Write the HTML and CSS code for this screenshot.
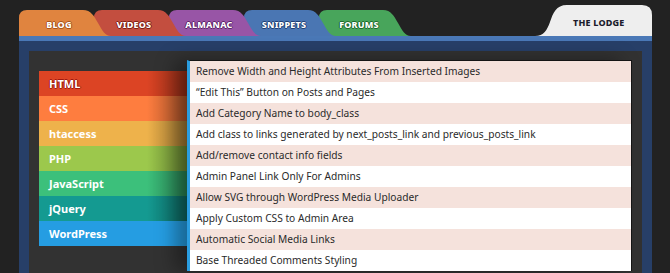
FILE: index.html
```html
<!DOCTYPE html>
<html>
<head>
<meta charset="utf-8">
<link rel="stylesheet" href="styles.css">
</head>
<body>
<div class="wrap">
  <nav class="tabs">
    <a class="tab tab-blog"><svg class="tab-bg" viewBox="0 0 92 26" preserveAspectRatio="none"><path d="M0 26 L0 8 Q0 0 8 0 L64 0 C72 0 75 6 79 13 C83 20 86 26 92 26 Z"/></svg><span>BLOG</span></a>
    <a class="tab tab-videos"><svg class="tab-bg" viewBox="0 0 92 26" preserveAspectRatio="none"><path d="M0 26 L0 8 Q0 0 8 0 L64 0 C72 0 75 6 79 13 C83 20 86 26 92 26 Z"/></svg><span>VIDEOS</span></a>
    <a class="tab tab-almanac"><svg class="tab-bg" viewBox="0 0 92 26" preserveAspectRatio="none"><path d="M0 26 L0 8 Q0 0 8 0 L64 0 C72 0 75 6 79 13 C83 20 86 26 92 26 Z"/></svg><span>ALMANAC</span></a>
    <a class="tab tab-snippets"><svg class="tab-bg" viewBox="0 0 92 26" preserveAspectRatio="none"><path d="M0 26 L0 8 Q0 0 8 0 L64 0 C72 0 75 6 79 13 C83 20 86 26 92 26 Z"/></svg><span>SNIPPETS</span></a>
    <a class="tab tab-forums"><svg class="tab-bg" viewBox="0 0 92 26" preserveAspectRatio="none"><path d="M0 26 L0 8 Q0 0 8 0 L64 0 C72 0 75 6 79 13 C83 20 86 26 92 26 Z"/></svg><span>FORUMS</span></a>
    <a class="lodge"><svg class="tab-bg" viewBox="0 0 117 31" preserveAspectRatio="none"><path d="M0 31 C9 31 12 25 15 17 C18 8 21 0 32 0 L107 0 Q117 0 117 10 L117 31 Z"/></svg><span>THE LODGE</span></a>
  </nav>
  <div class="frame">
    <div class="inner">
      <ul class="cats">
        <li class="cat c-html">HTML</li>
        <li class="cat c-css">CSS</li>
        <li class="cat c-htaccess">htaccess</li>
        <li class="cat c-php">PHP</li>
        <li class="cat c-js">JavaScript</li>
        <li class="cat c-jquery">jQuery</li>
        <li class="cat c-wp active">WordPress</li>
      </ul>
      <ul class="list">
        <li>Remove Width and Height Attributes From Inserted Images</li>
        <li>“Edit This” Button on Posts and Pages</li>
        <li>Add Category Name to body_class</li>
        <li>Add class to links generated by next_posts_link and previous_posts_link</li>
        <li>Add/remove contact info fields</li>
        <li>Admin Panel Link Only For Admins</li>
        <li>Allow SVG through WordPress Media Uploader</li>
        <li>Apply Custom CSS to Admin Area</li>
        <li>Automatic Social Media Links</li>
        <li>Base Threaded Comments Styling</li>
      </ul>
    </div>
  </div>
</div>
</body>
</html>
```

FILE: styles.css
```css
html, body {
  margin: 0;
  padding: 0;
  background: #222222;
  overflow: hidden;
  font-family: "Noto Sans", "Open Sans", sans-serif;
}
.wrap {
  margin-left: 19px;
  width: 633px;
  padding-top: 5px;
}
.tabs {
  display: flex;
  align-items: flex-end;
  height: 31px;
}
.tab, .lodge {
  position: relative;
  display: block;
  text-decoration: none;
}
.tab {
  width: 92px;
  height: 26px;
  margin-right: -17px;
}
.tab-bg {
  position: absolute;
  left: 0;
  top: 0;
  width: 100%;
  height: 100%;
  display: block;
}
.tab span {
  position: relative;
  display: block;
  width: 80px;
  text-align: center;
  padding-top: 9px;
  font-size: 9px;
  line-height: 12px;
  font-weight: 800;
  letter-spacing: 0.2px;
  color: #fff;
}
.tab-blog { z-index: 5; }
.tab-blog path { fill: #e0843f; }
.tab-blog span { text-shadow: 1px 0 #a9541b, -1px 0 #a9541b, 0 1px #a9541b, 0 -1px #a9541b; }
.tab-videos { z-index: 4; }
.tab-videos path { fill: #c34e3f; }
.tab-videos span { text-shadow: 1px 0 #7d1f16, -1px 0 #7d1f16, 0 1px #7d1f16, 0 -1px #7d1f16; }
.tab-almanac { z-index: 3; }
.tab-almanac path { fill: #9855a6; }
.tab-almanac span { text-shadow: 1px 0 #5b2468, -1px 0 #5b2468, 0 1px #5b2468, 0 -1px #5b2468; }
.tab-snippets { z-index: 2; }
.tab-snippets path { fill: #4a76b3; }
.tab-snippets span { text-shadow: 1px 0 #1f3f74, -1px 0 #1f3f74, 0 1px #1f3f74, 0 -1px #1f3f74; }
.tab-forums { z-index: 1; }
.tab-forums path { fill: #48a55b; }
.tab-forums span { text-shadow: 1px 0 #1e6a2c, -1px 0 #1e6a2c, 0 1px #1e6a2c, 0 -1px #1e6a2c; }
.lodge {
  margin-left: auto;
  width: 117px;
  height: 31px;
}
.lodge path { fill: #eeeeee; }
.lodge span {
  position: relative;
  display: block;
  padding-left: 38px;
  padding-top: 12px;
  font-size: 9px;
  line-height: 12px;
  font-weight: 800;
  color: #1c1c2c;
  letter-spacing: 0.2px;
}
.frame {
  background: #273f68;
  border-top: 5px solid #4a78b6;
  padding: 10px 10px 0 10px;
}
.inner {
  background: #323232;
  display: flex;
  align-items: flex-start;
  padding: 0 10px 0 10px;
  height: 240px;
}
.cats {
  list-style: none;
  margin: 20px 0 0 0;
  padding: 0;
  width: 148px;
  flex: none;
  position: relative;
}
.cat {
  height: 25px;
  line-height: 25px;
  padding-left: 10px;
  font-size: 11px;
  font-weight: 700;
  color: #fff;
  position: relative;
}
.cat::after {
  content: "";
  position: absolute;
  top: 0;
  right: 0;
  bottom: 0;
  width: 40px;
  background: linear-gradient(to right, rgba(0,0,0,0), rgba(0,0,0,0.35));
}
.cat.active::after { display: none; }
.c-html { background: #dc4424; text-shadow: 1px 0 #a01a10, -1px 0 #a01a10, 0 1px #a01a10, 0 -1px #a01a10; }
.c-css { background: #fe7d3f; }
.c-htaccess { background: #eeb24b; }
.c-php { background: #9cc84c; }
.c-js { background: #3cc07b; }
.c-jquery { background: #149a91; }
.c-wp { background: #259de2; }
.list {
  list-style: none;
  margin: 9px 0 0 0;
  padding: 0;
  flex: 1;
  border: 1px solid #151515;
  border-left: 3px solid #2a9de0;
  border-bottom: 0;
  box-shadow: -12px 0 18px rgba(0,0,0,0.35);
  position: relative;
  z-index: 0;
}
.list li {
  height: 21px;
  line-height: 21px;
  padding-left: 6px;
  font-size: 10.2px;
  color: #2a2a2a;
  background: #ffffff;
  white-space: nowrap;
  overflow: hidden;
}
.list li:nth-child(odd) {
  background: #f5e2dc;
}
```
